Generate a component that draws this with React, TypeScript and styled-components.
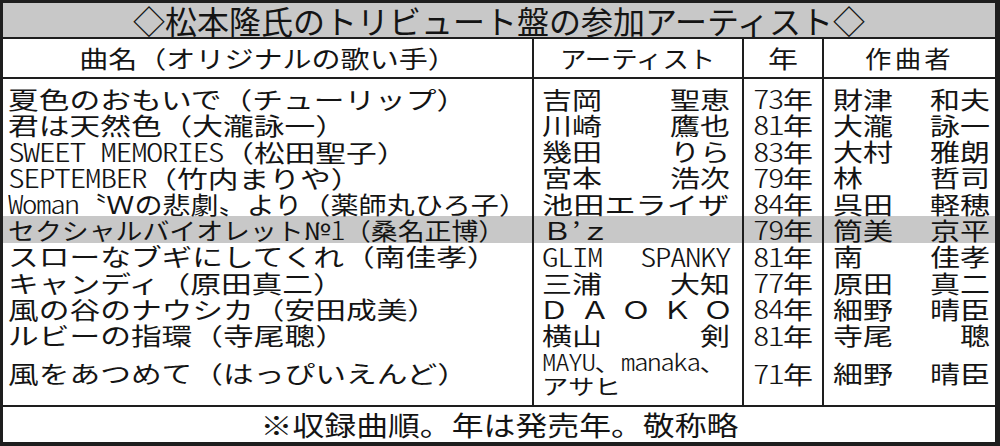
import React from "react";
import styled, { createGlobalStyle, css } from "styled-components";

const LINE = "#1e1e1e";
const SHADE = "#c8c8c8";
const COLS = "529px 210px 80px 1fr";

const GlobalStyle = createGlobalStyle`
  html, body {
    margin: 0;
    padding: 0;
    background: #fff;
  }
  body {
    font-family: "Noto Sans CJK JP", "Noto Sans", sans-serif;
    color: #141414;
  }
`;

const Frame = styled.div`
  width: 1000px;
  height: 446px;
  box-sizing: border-box;
  border: 3px solid ${LINE};
  border-right-width: 5px;
  border-bottom-width: 4px;
  display: flex;
  flex-direction: column;
  background: #fff;
`;

const TitleBar = styled.div`
  height: 34px;
  flex: none;
  background: ${SHADE};
  border-bottom: 2px solid ${LINE};
  display: flex;
  align-items: center;
  justify-content: center;
  font-size: 32px;
  line-height: 34px;
  white-space: nowrap;
`;

const HeadRow = styled.div`
  height: 38px;
  flex: none;
  display: grid;
  grid-template-columns: ${COLS};
  border-bottom: 2px solid ${LINE};
  font-size: 24px;
  line-height: 30px;
`;

const HeadCell = styled.div<{ $line?: boolean }>`
  display: flex;
  align-items: center;
  justify-content: center;
  border-left: ${(p) => (p.$line ? `2px solid ${LINE}` : "none")};
`;

const Body = styled.div`
  height: 326px;
  flex: none;
  display: flex;
  flex-direction: column;
  font-size: 24px;
  line-height: 26.3px;
`;

const Row = styled.div<{ $h?: number; $shade?: boolean }>`
  display: grid;
  grid-template-columns: ${COLS};
  height: ${(p) => p.$h ?? 26.3}px;
  flex: none;
  background: ${(p) => (p.$shade ? SHADE : "transparent")};
`;

const LastRow = styled(Row)`
  flex: 1;
  && > * {
    padding-bottom: 6px;
  }
`;

const cellBase = css`
  display: flex;
  align-items: center;
  box-sizing: border-box;
  min-width: 0;
`;

const SongCell = styled.div`
  ${cellBase}
  padding-left: 5px;
`;

const ArtistCell = styled.div`
  ${cellBase}
  border-left: 2px solid ${LINE};
  padding-left: 8px;
  padding-right: 12px;
  justify-content: space-between;
`;

const StackCell = styled(ArtistCell)`
  flex-direction: column;
  align-items: flex-start;
  justify-content: center;
`;

const YearCell = styled.div`
  ${cellBase}
  border-left: 2px solid ${LINE};
  justify-content: center;
`;

const ComposerCell = styled.div`
  ${cellBase}
  border-left: 2px solid ${LINE};
  padding-left: 9px;
  padding-right: 5px;
  justify-content: space-between;
`;

// newspaper type is set wide (平体), so text runs are stretched sideways
const Stretch = styled.span<{ $sx?: number; $o?: string }>`
  display: inline-block;
  white-space: nowrap;
  transform: scaleX(${(p) => p.$sx ?? 1.25});
  transform-origin: ${(p) => p.$o ?? "left"} center;
`;

const SmallLine = styled(Stretch)`
  font-size: 21px;
  line-height: 23px;
`;

// half-width latin and digits
const Lat = styled.span`
  display: inline-block;
  font-feature-settings: "hwid";
  font-weight: 300;
  font-size: 1.1em;
  letter-spacing: -0.045em;
`;

const Footer = styled.div`
  flex: 1;
  border-top: 2px solid ${LINE};
  display: flex;
  align-items: center;
  justify-content: center;
  font-size: 27px;
  line-height: 32px;
`;

type Split = [React.ReactNode, React.ReactNode];

type Entry = {
  song: React.ReactNode;
  sx?: number;
  shade?: boolean;
  artist: Split | React.ReactNode;
  year: string;
  composer: Split;
};

const entries: Entry[] = [
  { song: "夏色のおもいで（チューリップ）", artist: ["吉岡", "聖恵"], year: "73", composer: ["財津", "和夫"] },
  { song: "君は天然色（大瀧詠一）", artist: ["川崎", "鷹也"], year: "81", composer: ["大瀧", "詠一"] },
  {
    song: (
      <>
        <Lat>SWEET MEMORIES</Lat>（松田聖子）
      </>
    ),
    artist: ["幾田", "りら"],
    year: "83",
    composer: ["大村", "雅朗"],
  },
  {
    song: (
      <>
        <Lat>SEPTEMBER</Lat>（竹内まりや）
      </>
    ),
    artist: ["宮本", "浩次"],
    year: "79",
    composer: ["林", "哲司"],
  },
  {
    song: (
      <>
        <Lat>Woman</Lat>〝Ｗの悲劇〟より（薬師丸ひろ子）
      </>
    ),
    sx: 1.17,
    artist: <Stretch $sx={1.3}>池田エライザ</Stretch>,
    year: "84",
    composer: ["呉田", "軽穂"],
  },
  {
    song: (
      <>
        セクシャルバイオレット№<Lat>1</Lat>（桑名正博）
      </>
    ),
    sx: 1.12,
    shade: true,
    artist: <Stretch>Ｂ’ｚ</Stretch>,
    year: "79",
    composer: ["筒美", "京平"],
  },
  {
    song: "スローなブギにしてくれ（南佳孝）",
    artist: [<Lat>GLIM</Lat>, <Lat>SPANKY</Lat>],
    year: "81",
    composer: ["南", "佳孝"],
  },
  { song: "キャンディ（原田真二）", artist: ["三浦", "大知"], year: "77", composer: ["原田", "真二"] },
  {
    song: "風の谷のナウシカ（安田成美）",
    artist: (
      <>
        {["Ｄ", "Ａ", "Ｏ", "Ｋ", "Ｏ"].map((c, i) => (
          <Stretch key={i} $o="center">
            {c}
          </Stretch>
        ))}
      </>
    ),
    year: "84",
    composer: ["細野", "晴臣"],
  },
  { song: "ルビーの指環（寺尾聰）", artist: ["横山", "剣"], year: "81", composer: ["寺尾", "聰"] },
];

function isSplit(a: Entry["artist"]): a is Split {
  return Array.isArray(a);
}

function Pair({ parts }: { parts: Split }) {
  return (
    <>
      <Stretch $o="left">{parts[0]}</Stretch>
      <Stretch $o="right">{parts[1]}</Stretch>
    </>
  );
}

function Year({ y }: { y: string }) {
  return (
    <YearCell>
      <Stretch $o="center">
        <Lat>{y}</Lat>年
      </Stretch>
    </YearCell>
  );
}

export default function App() {
  return (
    <>
      <GlobalStyle />
      <Frame>
        <TitleBar>◇松本隆氏のトリビュート盤の参加アーティスト◇</TitleBar>
        <HeadRow>
          <HeadCell>
            <Stretch $sx={1.21} $o="center">曲名（オリジナルの歌い手）</Stretch>
          </HeadCell>
          <HeadCell $line>
            <Stretch $sx={1.1} $o="center">アーティスト</Stretch>
          </HeadCell>
          <HeadCell $line>
            <Stretch $o="center">年</Stretch>
          </HeadCell>
          <HeadCell $line>
            <Stretch $sx={1.1} $o="center" style={{ letterSpacing: "3px" }}>
              作曲者
            </Stretch>
          </HeadCell>
        </HeadRow>
        <Body>
          <Row $h={6}>
            <SongCell />
            <ArtistCell />
            <YearCell />
            <ComposerCell />
          </Row>
          {entries.map((e, i) => (
            <Row key={i} $shade={e.shade}>
              <SongCell>
                <Stretch $sx={e.sx ?? 1.28}>{e.song}</Stretch>
              </SongCell>
              <ArtistCell>{isSplit(e.artist) ? <Pair parts={e.artist} /> : e.artist}</ArtistCell>
              <Year y={e.year} />
              <ComposerCell>
                <Pair parts={e.composer} />
              </ComposerCell>
            </Row>
          ))}
          <LastRow>
            <SongCell>
              <Stretch $sx={1.28}>風をあつめて（はっぴいえんど）</Stretch>
            </SongCell>
            <StackCell>
              <SmallLine>
                <Lat>MAYU</Lat>、<Lat>manaka</Lat>、
              </SmallLine>
              <SmallLine>アサヒ</SmallLine>
            </StackCell>
            <Year y="71" />
            <ComposerCell>
              <Pair parts={["細野", "晴臣"]} />
            </ComposerCell>
          </LastRow>
        </Body>
        <Footer>
          <Stretch $sx={1.18} $o="center">※収録曲順。年は発売年。敬称略</Stretch>
        </Footer>
      </Frame>
    </>
  );
}
